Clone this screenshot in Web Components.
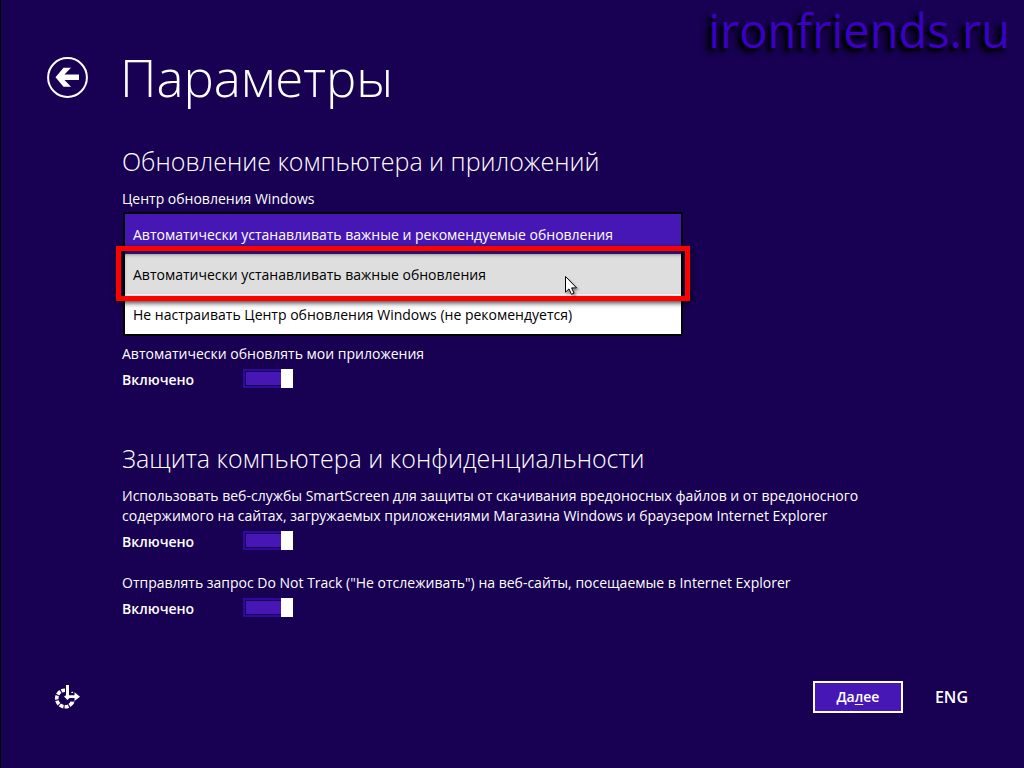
<!DOCTYPE html>
<html lang="ru">
<head>
<meta charset="utf-8">
<title>Параметры</title>
<style>
  body {
    margin: 0;
    background: #180052;
    color: #fff;
    font: 14px/20px "Open Sans", "Noto Sans", sans-serif;
  }
</style>
</head>
<body>
<setup-page>
  <site-mark slot="mark">ironfriends.ru</site-mark>
  <page-header slot="header">Параметры</page-header>
  <settings-group heading="Обновление компьютера и приложений">
    <update-picker label="Центр обновления Windows"></update-picker>
    <toggle-setting>Автоматически обновлять мои приложения</toggle-setting>
  </settings-group>
  <settings-group heading="Защита компьютера и конфиденциальности">
    <toggle-setting>Использовать веб-службы SmartScreen для защиты от скачивания вредоносных файлов и от вредоносного содержимого на сайтах, загружаемых приложениями Магазина Windows и браузером Internet Explorer</toggle-setting>
    <toggle-setting>Отправлять запрос Do Not Track ("Не отслеживать") на веб-сайты, посещаемые в Internet Explorer</toggle-setting>
  </settings-group>
  <page-footer slot="footer"></page-footer>
</setup-page>

<script>
const define = (name, html, setup) => {
  const template = document.createElement('template');
  template.innerHTML = html;
  customElements.define(name, class extends HTMLElement {
    constructor() {
      super();
      this.attachShadow({ mode: 'open' }).append(template.content.cloneNode(true));
    }
    connectedCallback() {
      if (setup) setup(this, this.shadowRoot);
    }
  });
};

define('setup-page', `
  <style>
    :host {
      display: flex; flex-direction: column; box-sizing: border-box;
      min-height: 100vh; position: relative; border-left: 1px solid #000;
      padding: 45px 56px 55px 46px;
    }
    main { display: flex; flex-direction: column; gap: 53px; padding: 36px 0 32px 75px; max-width: 760px; }
    footer { margin-top: auto; }
    ::slotted(site-mark) { position: absolute; top: 0; right: 14px; }
  </style>
  <slot name="mark"></slot>
  <header><slot name="header"></slot></header>
  <main><slot></slot></main>
  <footer><slot name="footer"></slot></footer>
`);

define('site-mark', `
  <style>
    :host {
      display: block; font-size: 47px; line-height: 60px;
      color: #3a00c4; text-shadow: -3px 3px 3px #000, -5px 4px 6px #000;
    }
  </style>
  <slot></slot>
`);

define('page-header', `
  <style>
    :host { display: flex; align-items: center; gap: 32px; }
    button { width: 41px; height: 41px; padding: 0; border: 0; background: none; color: inherit; }
    svg { display: block; }
    h1 { margin: 0; font-size: 51px; line-height: 64px; font-weight: 300; }
  </style>
  <button type="button" aria-label="Назад">
    <svg width="41" height="41" viewBox="0 0 41 41">
      <circle cx="20.5" cy="20.5" r="19.4" fill="none" stroke="#fff" stroke-width="2"/>
      <path d="M8.5 20.3 16.5 10.8H24L17.5 17.6H32V23H17.5L24 29.8H16.5Z" fill="#fff"/>
    </svg>
  </button>
  <h1><slot></slot></h1>
`);

define('settings-group', `
  <style>
    :host { display: block; }
    h2 { margin: 0 0 12px; font-size: 25px; line-height: 32px; font-weight: 300; }
    div { display: flex; flex-direction: column; gap: 22px; }
    ::slotted(update-picker) { margin-bottom: -14px; }
  </style>
  <section><h2></h2><div><slot></slot></div></section>
`, (host, root) => {
  root.querySelector('h2').textContent = host.getAttribute('heading');
});

define('update-picker', `
  <style>
    :host { display: block; }
    label { display: block; margin-bottom: 3px; }
    .list { position: relative; max-width: 560px; margin-left: 1px; }
    select {
      display: block; width: 100%; height: 124px; box-sizing: border-box; margin: 0; padding: 0;
      border: 2px solid #000; border-radius: 0; background: #fff; color: #000;
      font: inherit; overflow: hidden; outline: 0; appearance: none;
    }
    option { box-sizing: border-box; height: 40px; min-height: 40px; padding: 11px 8px 9px; line-height: 20px; color: #000; }
    option:checked { background: #4617b4 linear-gradient(#4617b4, #4617b4); color: #fff; }
    option.hover { background: #dedede; }
    .frame {
      position: absolute; top: 34px; left: -7px; right: -7px; height: 45px;
      border: 5px solid #f00; pointer-events: none;
      box-shadow: 1px 2px 5px rgba(0,0,0,.75), inset 1px 2px 5px rgba(0,0,0,.75);
    }
    .pointer { position: absolute; top: 63px; right: 105px; pointer-events: none; filter: drop-shadow(2px 2px 1px rgba(0,0,0,.35)); }
  </style>
  <label for="updates"></label>
  <div class="list">
    <select id="updates" size="3">
      <option selected>Автоматически устанавливать важные и рекомендуемые обновления</option>
      <option class="hover">Автоматически устанавливать важные обновления</option>
      <option>Не настраивать Центр обновления Windows (не рекомендуется)</option>
    </select>
    <div class="frame"></div>
    <svg class="pointer" width="14" height="21" viewBox="0 0 14 21">
      <path d="M1.5 1.5V17.2L5 13.9 7.4 19.3 10 18.1 7.6 12.9H12.6Z" fill="#fff" stroke="#000" stroke-width="1"/>
    </svg>
  </div>
`, (host, root) => {
  root.querySelector('label').textContent = host.getAttribute('label');
});

define('toggle-setting', `
  <style>
    :host { display: block; }
    label { display: block; margin-bottom: 5px; }
    .row { display: grid; grid-template-columns: 121px 50px; align-items: center; height: 20px; font-weight: 600; }
    input {
      appearance: none; display: block; box-sizing: border-box; width: 50px; height: 19px; margin: 0 0 2px;
      border: 2px solid #2d0a9b; padding: 1px; background: #4617b4 content-box; position: relative;
    }
    input::after { content: ""; position: absolute; top: -2px; right: -2px; width: 12px; height: 19px; background: #fff; }
  </style>
  <label for="toggle"><slot></slot></label>
  <div class="row"><span>Включено</span><input id="toggle" type="checkbox" role="switch" checked></div>
`);

define('page-footer', `
  <style>
    :host { display: flex; align-items: center; gap: 32px; }
    button { font: inherit; font-weight: 600; color: #fff; border: 0; padding: 0; background: none; }
    .access { margin: 0 auto 0 7px; }
    svg { display: block; }
    .next { width: 90px; height: 32px; border: 2px solid #fff; background: #4617b4; }
    .lang { font-size: 16px; }
    u { text-underline-offset: 2px; }
  </style>
  <button class="access" type="button" aria-label="Специальные возможности">
    <svg width="28" height="26" viewBox="0 0 28 26">
      <circle cx="11" cy="14.5" r="8.3" fill="none" stroke="#fff" stroke-width="3.6" stroke-dasharray="3.9 1.1" stroke-dashoffset="1" pathLength="50"/>
      <path d="M11 0H17V9H26V17.5H20L15 16.5 11 13Z" fill="#180052"/>
      <path d="M16.6 17.5 20.4 18.2 18.6 21 15.8 19.4Z" fill="#fff"/>
      <path d="M12 1H15V11.3H20.5V8.3L26 12.7 20.5 17V14H15.5L13.5 16 10 12.4 12 11.3Z" fill="#fff"/>
    </svg>
  </button>
  <button class="next" type="button">Да<u>л</u>ее</button>
  <button class="lang" type="button">ENG</button>
`);
</script>
</body>
</html>
